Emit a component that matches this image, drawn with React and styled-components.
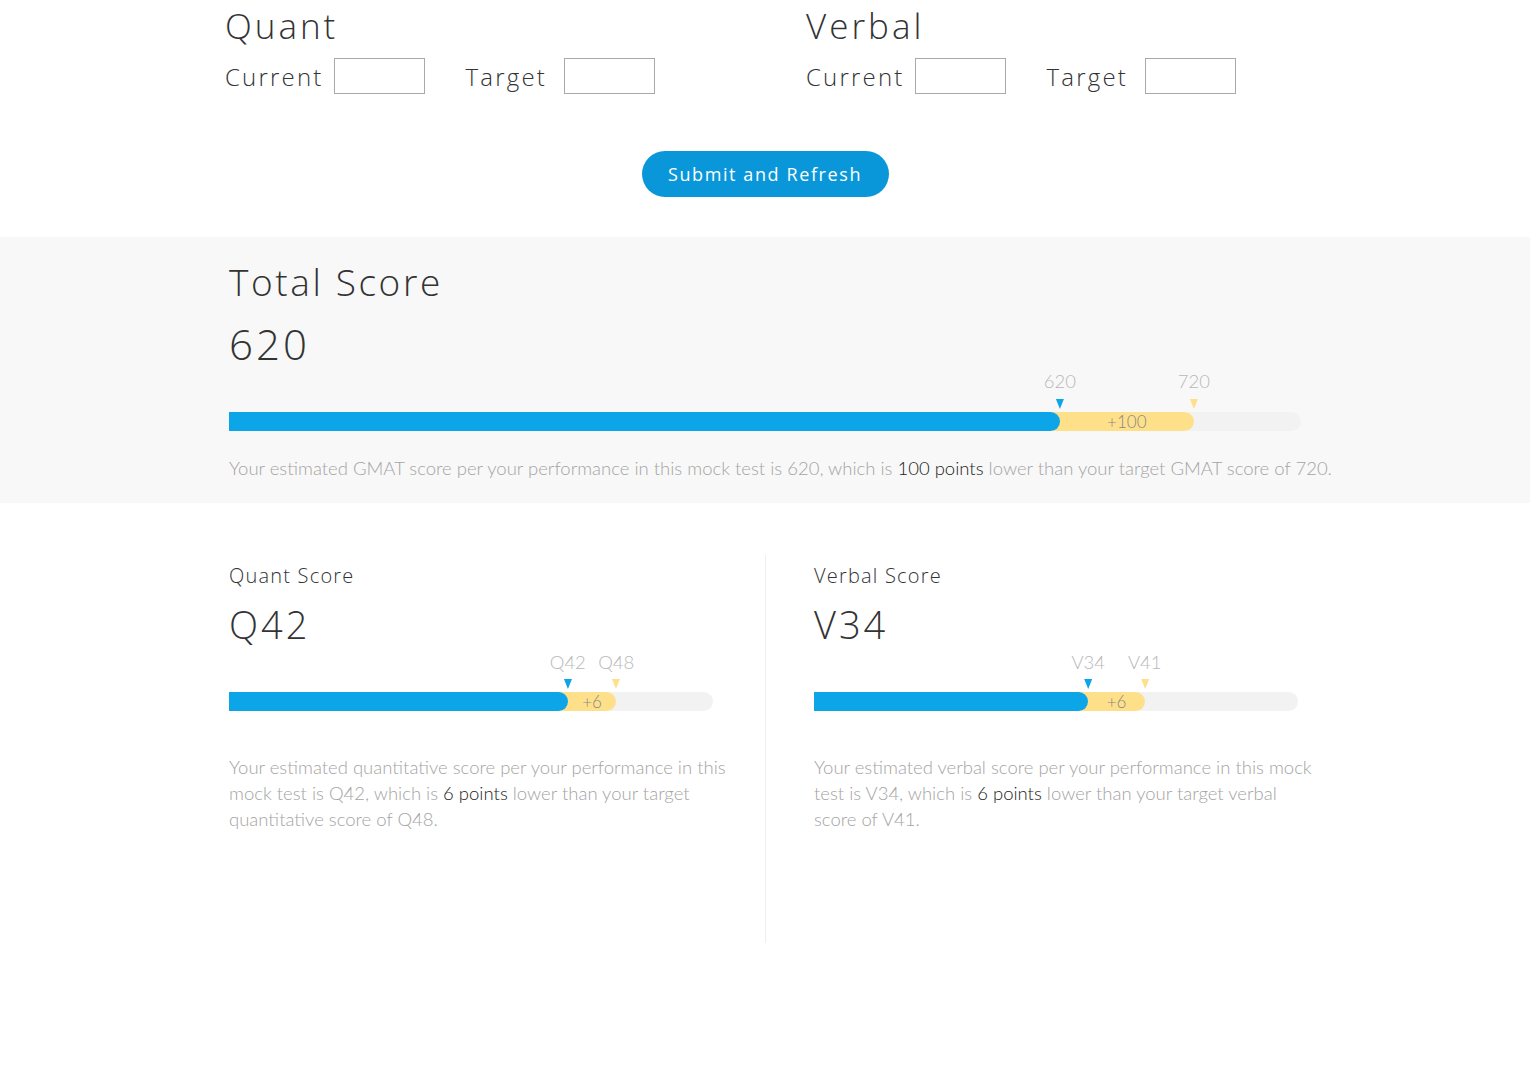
import React from 'react';
import styled, { createGlobalStyle } from 'styled-components';

const GlobalStyle = createGlobalStyle`
  body {
    margin: 0;
    background: #fff;
    font-family: Lato, "Open Sans", sans-serif;
  }
`;

const HEAD_FONT = `"Open Sans", "Noto Sans", sans-serif`;

const Page = styled.div`
  width: 1530px;
  min-height: 1081px;
  background: #fff;
`;

const Form = styled.div`
  width: 1080px;
  margin: 0 auto;
  padding-top: 4px;
  display: grid;
  grid-template-columns: 581px 1fr;
`;

const FieldGroup = styled.div`
  display: flex;
  flex-direction: column;
`;

const GroupTitle = styled.h2`
  margin: 0;
  font-family: ${HEAD_FONT};
  font-weight: 300;
  font-size: 35px;
  line-height: 44px;
  letter-spacing: 3px;
  color: #333;
`;

const FieldRow = styled.div`
  display: flex;
  align-items: center;
  margin-top: 10px;
`;

const FieldLabel = styled.label`
  font-family: ${HEAD_FONT};
  font-weight: 300;
  font-size: 24px;
  letter-spacing: 2.2px;
  color: #333;
  margin-right: ${(p) => p.gap}px;
`;

const Input = styled.input`
  box-sizing: border-box;
  width: 91px;
  height: 36px;
  border: 1px solid #a9a9a9;
  background: #fff;
  margin-right: ${(p) => p.after || 0}px;
`;

const ButtonRow = styled.div`
  display: flex;
  justify-content: center;
  padding: 57px 0 40px;
`;

const SubmitButton = styled.button`
  width: 247px;
  height: 46px;
  border: none;
  border-radius: 23px;
  background: #0a97d9;
  color: #fff;
  font-family: ${HEAD_FONT};
  font-size: 18px;
  font-weight: 400;
  letter-spacing: 1.6px;
  cursor: pointer;
`;

const TotalSection = styled.section`
  background: #f8f8f8;
  height: 266px;
  box-sizing: border-box;
  padding-top: 22px;
`;

const Inner = styled.div`
  width: 1072px;
  margin: 0 auto;
`;

const BigTitle = styled.h2`
  margin: 0;
  font-family: ${HEAD_FONT};
  font-weight: 300;
  font-size: 37px;
  line-height: 46px;
  letter-spacing: 2.6px;
  color: #333;
`;

const BigScore = styled.div`
  margin-top: 14px;
  font-family: ${HEAD_FONT};
  font-weight: 300;
  font-size: 42px;
  line-height: 50px;
  letter-spacing: 3px;
  color: #333;
`;

const SmallTitle = styled.h3`
  margin: 0;
  font-family: ${HEAD_FONT};
  font-weight: 300;
  font-size: 20px;
  line-height: 26px;
  letter-spacing: 1.2px;
  color: #333;
`;

const MidScore = styled.div`
  margin-top: 13px;
  font-family: ${HEAD_FONT};
  font-weight: 300;
  font-size: 38px;
  line-height: 44px;
  letter-spacing: 3px;
  color: #333;
`;

const Chart = styled.div`
  width: ${(p) => p.width}px;
  margin-top: ${(p) => p.top}px;
`;

const LabelRow = styled.div`
  position: relative;
  height: ${(p) => 30 + p.gap}px;
`;

const Marker = styled.div`
  position: absolute;
  top: 0;
  transform: translateX(-50%);
  display: flex;
  flex-direction: column;
  align-items: center;
`;

const MarkerText = styled.span`
  font-family: Lato, sans-serif;
  font-weight: 300;
  font-size: 18.5px;
  line-height: 20px;
  color: #b8b8b8;
  white-space: nowrap;
`;

const Arrow = styled.span`
  width: 0;
  height: 0;
  margin-top: ${(p) => p.gap}px;
  border-left: 4px solid transparent;
  border-right: 4px solid transparent;
  border-top: 10px solid ${(p) => p.color};
`;

const Track = styled.div`
  margin-top: 3px;
  height: 19px;
  border-radius: 10px;
  background: #f2f2f2;
  position: relative;
  display: flex;
`;

const Gain = styled.div`
  box-sizing: border-box;
  height: 100%;
  background: #ffe08a;
  border-radius: 0 10px 10px 0;
  display: flex;
  align-items: center;
  justify-content: center;
  font-family: Lato, sans-serif;
  font-weight: 300;
  font-size: 17px;
  color: #888;
`;

const Current = styled.div`
  position: absolute;
  left: 0;
  top: 0;
  height: 100%;
  background: #0ba5e8;
  border-radius: 0 10px 10px 0;
  z-index: 1;
`;

const Summary = styled.p`
  margin: ${(p) => p.top}px 0 0;
  width: ${(p) => p.width}px;
  font-family: Lato, sans-serif;
  font-weight: 300;
  font-size: 18.5px;
  line-height: 26px;
  color: #a4a4a4;
  white-space: ${(p) => (p.nowrap ? 'nowrap' : 'normal')};
`;

const Strong = styled.span`
  color: #222;
  font-weight: 300;
`;

const SectionGrid = styled.div`
  width: 1072px;
  margin: 52px auto 0;
  display: grid;
  grid-template-columns: 536px 1fr;
`;

const SectionCol = styled.div`
  padding: ${(p) => (p.right ? '8px 0 0 48px' : '8px 0 0 0')};
  border-left: ${(p) => (p.right ? '1px solid #eee' : 'none')};
  height: 388px;
  box-sizing: border-box;
`;

function ScoreBar({ width, max, current, target, prefix, top, gap, gain }) {
  const px = (v) => (v / max) * width;
  const c = px(current);
  const t = px(target);
  return (
    <Chart width={width} top={top}>
      <LabelRow gap={gap}>
        <Marker style={{ left: c }}>
          <MarkerText>{prefix}{current}</MarkerText>
          <Arrow color="#0ba5e8" gap={gap} />
        </Marker>
        <Marker style={{ left: t }}>
          <MarkerText>{prefix}{target}</MarkerText>
          <Arrow color="#ffe08a" gap={gap} />
        </Marker>
      </LabelRow>
      <Track>
        <Current style={{ width: c }} />
        <Gain style={{ width: t, paddingLeft: c }}>{gain}</Gain>
      </Track>
    </Chart>
  );
}

export default function App() {
  return (
    <Page>
      <GlobalStyle />
      <Form>
        {['Quant', 'Verbal'].map((name) => (
          <FieldGroup key={name}>
            <GroupTitle>{name}</GroupTitle>
            <FieldRow>
              <FieldLabel gap={10}>Current</FieldLabel>
              <Input after={41} />
              <FieldLabel gap={17}>Target</FieldLabel>
              <Input />
            </FieldRow>
          </FieldGroup>
        ))}
      </Form>
      <ButtonRow>
        <SubmitButton>Submit and Refresh</SubmitButton>
      </ButtonRow>
      <TotalSection>
        <Inner>
          <BigTitle>Total Score</BigTitle>
          <BigScore>620</BigScore>
          <ScoreBar width={1072} max={800} current={620} target={720} prefix="" top={2} gap={8} gain="+100" />
          <Summary top={24} width={1120} nowrap>
            Your estimated GMAT score per your performance in this mock test is 620, which is{' '}
            <Strong>100 points</Strong> lower than your target GMAT score of 720.
          </Summary>
        </Inner>
      </TotalSection>
      <SectionGrid>
        <SectionCol>
          <SmallTitle>Quant Score</SmallTitle>
          <MidScore>Q42</MidScore>
          <ScoreBar width={484} max={60} current={42} target={48} prefix="Q" top={6} gap={7} gain="+6" />
          <Summary top={43} width={505}>
            Your estimated quantitative score per your performance in this mock test is Q42,
            which is <Strong>6 points</Strong> lower than your target quantitative score of Q48.
          </Summary>
        </SectionCol>
        <SectionCol right>
          <SmallTitle>Verbal Score</SmallTitle>
          <MidScore>V34</MidScore>
          <ScoreBar width={484} max={60} current={34} target={41} prefix="V" top={6} gap={7} gain="+6" />
          <Summary top={43} width={505}>
            Your estimated verbal score per your performance in this mock test is V34, which
            is <Strong>6 points</Strong> lower than your target verbal score of V41.
          </Summary>
        </SectionCol>
      </SectionGrid>
    </Page>
  );
}
